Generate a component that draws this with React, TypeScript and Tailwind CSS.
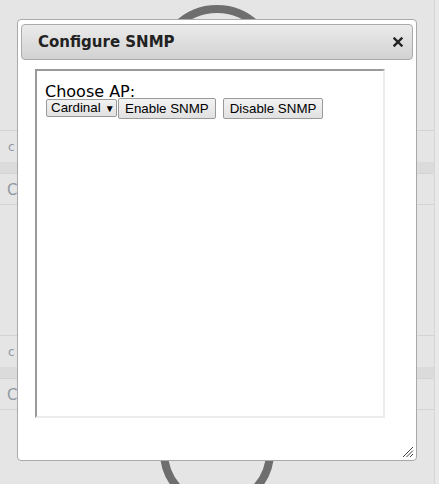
import React from "react";

const bgRows = [
  { top: "pt-[130px]" },
  { top: "pt-[130px]" },
];

const BackRow = () => (
  <div className="flex flex-col">
    <div className="flex h-[32px] items-center border-t border-[#d3d3d3] pl-[8px] text-[12px] text-[#8f98a3]">
      c
    </div>
    <div className="h-[11px] bg-[#dbdbdb]" />
    <div className="flex h-[32px] items-center rounded-tr-[3px] border-y border-[#d3d3d3] pl-[7px] pt-[3px] text-[15px] text-[#8f98a3]">
      C
    </div>
  </div>
);

const CloseIcon = () => (
  <svg width="10" height="10" viewBox="0 0 10 10">
    <path d="M1.5 1.5 L8.5 8.5 M8.5 1.5 L1.5 8.5" stroke="#222" strokeWidth="2.4" strokeLinecap="square" />
  </svg>
);

const Grip = () => (
  <svg width="12" height="12" viewBox="0 0 12 12">
    <path d="M1 11 L11 1 M4.5 11 L11 4.5 M8 11 L11 8" stroke="#444" strokeWidth="1" />
  </svg>
);

const Button = ({ label }: { label: string }) => (
  <div className="flex h-[21px] items-center rounded-[2px] border border-[#9a9a9a] bg-gradient-to-b from-[#f3f3f3] to-[#e1e1e1] px-[6px] text-[13.33px] text-black [font-family:'Liberation_Sans',Arial,sans-serif]">
    {label}
  </div>
);

export default function App() {
  return (
    <div className="relative h-[484px] w-[439px] overflow-hidden bg-[#e5e5e5] [font-family:'DejaVu_Sans',sans-serif]">
      {/* page behind the overlay */}
      <div className="flex h-full">
        <div className="flex w-[434px] flex-col">
          {bgRows.map((r, i) => (
            <div key={i} className={r.top}>
              <BackRow />
            </div>
          ))}
        </div>
        <div className="h-full w-[5px] border-l border-[#d6d6d6] bg-[#e9e9e9]" />
      </div>

      {/* ring graphic behind dialog */}
      <svg className="absolute left-0 top-0" width="439" height="484" viewBox="0 0 439 484">
        <circle cx="217" cy="66" r="57" fill="none" stroke="#6e6e6e" strokeWidth="8" />
        <circle cx="217" cy="452" r="53" fill="none" stroke="#6e6e6e" strokeWidth="8" />
      </svg>

      {/* dialog */}
      <div className="absolute left-[17px] top-[19px] flex h-[442px] w-[400px] flex-col rounded-[4px] border border-[#a9a9a9] bg-white px-[3px] pt-[4px]">
        <div className="flex h-[36px] items-center justify-between rounded-[4px] border border-[#aaaaaa] bg-gradient-to-b from-[#ebebeb] to-[#d2d2d2] pl-[16px] pr-[9px]">
          <span className="text-[15px] font-bold text-[#222]">Configure SNMP</span>
          <CloseIcon />
        </div>

        <div className="ml-[14px] mt-[9px] h-[349px] w-[350px] border-2 border-b-[#ececec] border-l-[#9a9a9a] border-r-[#ececec] border-t-[#9a9a9a] pl-[8px] pt-[13px]">
          <div className="h-[14px] text-[16px] leading-[16px] text-black">Choose AP:</div>
          <div className="flex items-start">
            <div className="ml-[1px] mt-[1px] flex h-[18px] w-[71px] items-center rounded-[2px] border border-[#9a9a9a] bg-gradient-to-b from-[#f1f1f1] to-[#e2e2e2] pl-[4px] text-[13.33px] text-black [font-family:'Liberation_Sans',Arial,sans-serif]">
              Cardinal
              <span className="ml-[4px] text-[10px]">▼</span>
            </div>
            <div className="ml-[1px]">
              <Button label="Enable SNMP" />
            </div>
            <div className="ml-[7px]">
              <Button label="Disable SNMP" />
            </div>
          </div>
        </div>

        <div className="absolute bottom-[2px] right-[2px]">
          <Grip />
        </div>
      </div>
    </div>
  );
}
